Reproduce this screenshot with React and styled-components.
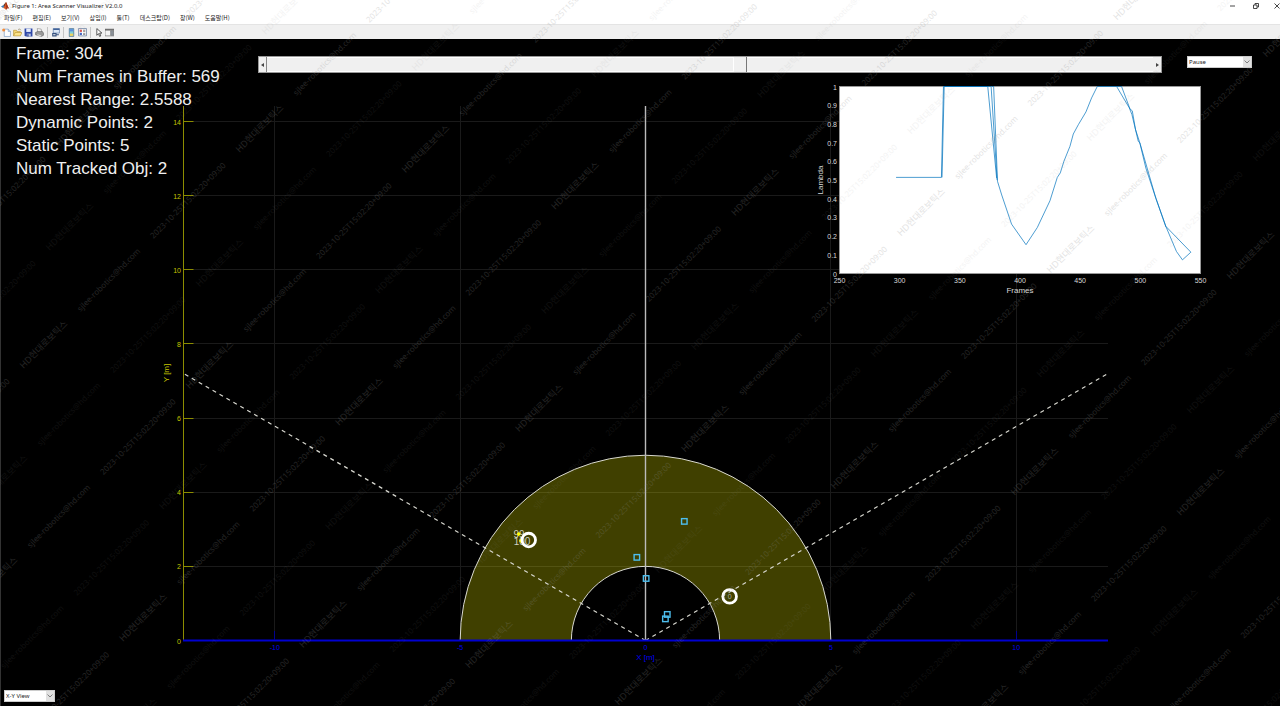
import { useState } from "react";
import styled, { createGlobalStyle } from "styled-components";

const menus = [
  "파일(F)",
  "편집(E)",
  "보기(V)",
  "삽입(I)",
  "툴(T)",
  "데스크탑(D)",
  "창(W)",
  "도움말(H)",
];

const totalFrames = 569;

// [frame, lambda]
const lambdaTraces = [
  [[297, 0.514], [334.7, 0.514], [336.4, 1], [373.2, 1], [380.6, 0.51]],
  [[335.2, 0.514], [337, 1], [376, 1], [381, 0.5]],
  [
    [376.4, 1], [378.1, 1], [381.3, 0.493], [384.8, 0.42], [393, 0.264],
    [405, 0.154], [414.4, 0.246], [424.9, 0.389], [431, 0.514], [433.5, 0.538],
    [436.5, 0.6], [441.5, 0.68], [444.3, 0.746], [448.5, 0.796], [454.8, 0.864],
    [459.5, 0.939], [464.2, 1], [480.3, 1], [490.8, 0.886], [493, 0.85],
    [498.3, 0.707], [499.6, 0.698], [504.6, 0.564], [512, 0.42], [521.2, 0.252],
    [542, 0.114], [535, 0.073], [530, 0.118], [521.2, 0.252],
  ],
  [
    [480.3, 1], [484.4, 1], [491.4, 0.88], [493.3, 0.87], [496, 0.77],
    [500, 0.69], [513, 0.4], [521.2, 0.25],
  ],
];

// metres, relative to the sensor
const staticPoints = [
  [1.04, 3.22],
  [-0.24, 2.25],
  [0.01, 1.68],
  [0.58, 0.71],
  [0.53, 0.59],
];
const dynamicPoints = [
  [-3.42, 2.87],
  [-3.36, 2.69],
];
const trackedObjects = [
  [-3.15, 2.71],
  [2.27, 1.19],
];

const SCALE = 37.07;
const toX = (m) => 645.5 + m * SCALE;
const toY = (m) => 601.5 - m * SCALE;

const range = (from, to, step = 1) => {
  const list = [];
  for (let i = from; i <= to; i += step) list.push(i);
  return list;
};

const arc = (r) =>
  `M${toX(-r)} ${toY(0)}A${r * SCALE} ${r * SCALE} 0 0 1 ${toX(r)} ${toY(0)}`;

const zone = `${arc(5)}L${toX(2)} ${toY(0)}A${2 * SCALE} ${2 * SCALE} 0 0 0 ${toX(-2)} ${toY(0)}Z`;

const App = () => {
  const [frame, setFrame] = useState(304);

  const stats = [
    `Frame: ${frame}`,
    `Num Frames in Buffer: ${totalFrames}`,
    "Nearest Range: 2.5588",
    "Dynamic Points: 2",
    "Static Points: 5",
    "Num Tracked Obj: 2",
  ];

  return (
    <Window>
      <GlobalStyle />
      <TitleBar>
        <Logo />
        <Title>Figure 1: Area Scanner Visualizer V2.0.0</Title>
        <WindowButtons />
      </TitleBar>
      <MenuBar>
        {menus.map((menu) => (
          <MenuButton key={menu}>{menu}</MenuButton>
        ))}
      </MenuBar>
      <Toolbar />
      <Figure>
        <AreaPlot />
        <Stats>
          {stats.map((line) => (
            <li key={line}>{line}</li>
          ))}
        </Stats>
        <ScrollBar>
          <ArrowButton
            aria-label='Previous frame'
            onClick={() => setFrame(Math.max(0, frame - 1))}
          >
            <svg width='3' height='4' viewBox='0 0 3 4'>
              <path d='M3 0v4L0 2z' fill='#444' />
            </svg>
          </ArrowButton>
          <FrameRange
            type='range'
            aria-label='Frame'
            min='0'
            max={totalFrames}
            value={frame}
            onChange={(e) => setFrame(Number(e.target.value))}
          />
          <ArrowButton
            $end
            aria-label='Next frame'
            onClick={() => setFrame(Math.min(totalFrames, frame + 1))}
          >
            <svg width='3' height='4' viewBox='0 0 3 4'>
              <path d='M0 0v4l3-2z' fill='#444' />
            </svg>
          </ArrowButton>
        </ScrollBar>
        <PlaybackBox>
          <DropDown label='Playback' options={["Pause", "Play"]} />
        </PlaybackBox>
        <LambdaPlot />
        <ViewBox>
          <DropDown label='View' options={["X-Y View", "3D View"]} />
        </ViewBox>
      </Figure>
      <Watermark />
    </Window>
  );
};

const DropDown = ({ label, options }) => (
  <SelectBox>
    <Select aria-label={label}>
      {options.map((option) => (
        <option key={option}>{option}</option>
      ))}
    </Select>
    <SelectArrow>
      <svg width='6' height='4' viewBox='0 0 6 4'>
        <path d='M.5.5L3 3 5.5.5' fill='none' stroke='#666' strokeWidth='.8' />
      </svg>
    </SelectArrow>
  </SelectBox>
);

const Logo = () => (
  <svg width='8' height='8' viewBox='0 0 16 16'>
    <path d='M0 9l5-3 3 3-4 3z' fill='#3f7fb5' />
    <path d='M5 6l5-6 1 4-4 6z' fill='#6b3b2a' />
    <path d='M10 0c2 3 3 9 6 13-3-1-4-1-6 3-1-2-3-4-6-4 3-2 5-7 6-12z' fill='#d9541e' />
    <path d='M10 0c1 4 0 9 0 16 2-4 3-4 6-3-3-4-4-10-6-13z' fill='#a32c14' />
  </svg>
);

const WindowButtons = () => (
  <Controls>
    <ControlButton aria-label='Minimize'>
      <svg width='6' height='6' viewBox='0 0 6 6'>
        <path d='M0 3h5' stroke='#333' strokeWidth='.9' />
      </svg>
    </ControlButton>
    <ControlButton aria-label='Restore'>
      <svg width='6' height='6' viewBox='0 0 6 6' fill='none' stroke='#333' strokeWidth='.9'>
        <path d='M.5 2h3.5v3.5H.5zM2 2V.5h3.5V4H4' />
      </svg>
    </ControlButton>
    <ControlButton aria-label='Close'>
      <svg width='6' height='6' viewBox='0 0 6 6'>
        <path d='M.5.5l5 5m0-5l-5 5' stroke='#333' strokeWidth='.9' />
      </svg>
    </ControlButton>
  </Controls>
);

const Toolbar = () => (
  <ToolRow>
    <Tool label='New figure'>
      <path d='M4 2h7l4 4v9H4z' fill='#fff' stroke='#5b84b8' />
      <path d='M11 2v4h4' fill='#dbe7f5' stroke='#5b84b8' />
      <circle cx='3' cy='3.5' r='2.8' fill='#f08c3c' />
    </Tool>
    <Tool label='Open'>
      <path d='M1 14V4h5l1 2h6v3' fill='#f6d873' stroke='#b08a28' />
      <path d='M1 14l3-6h12l-3 6z' fill='#fbe38a' stroke='#b08a28' />
      <path d='M9 3c2-2 4-1 5 1' fill='none' stroke='#7a6a3a' />
    </Tool>
    <Tool label='Save'>
      <path d='M1 1h14v14H3l-2-2z' fill='#2f48a8' />
      <path d='M4 1h8v6H4z' fill='#e6ecfa' />
      <path d='M5 10h7v5H5z' fill='#b9c4e4' />
      <path d='M6 11h2v4H6z' fill='#22337c' />
    </Tool>
    <Tool label='Print'>
      <path d='M4 1l7 1 1 6H5z' fill='#fff' stroke='#777' />
      <path d='M1 8l4-2h8l2 3v4l-4 2-10-3z' fill='#999' stroke='#555' />
      <path d='M4 11l7 2v2l-7-2z' fill='#ddd' />
    </Tool>
    <Divider />
    <Tool label='Link plot'>
      <path d='M4 1h11v8H4z' fill='#dce8f6' stroke='#3c5f96' />
      <path d='M4 1h11v2.500H4z' fill='#3c5f96' />
      <path d='M3 10h6v4H3zM8 12h6' fill='none' stroke='#34507f' strokeWidth='1.800' />
    </Tool>
    <Divider />
    <Tool label='Insert colorbar'>
      <path d='M4 1h8v14H4z' fill='#7fd0d8' stroke='#34507f' />
      <path d='M5 2h6v4H5z' fill='#5b8fe0' />
      <path d='M5 10h6v4H5z' fill='#f2d45c' />
    </Tool>
    <Tool label='Insert legend'>
      <path d='M1 1h14v13H1z' fill='#fff' stroke='#34507f' />
      <path d='M3 3h4v4H3z' fill='#d9534f' />
      <path d='M3 8.500h4v4H3z' fill='#4466c4' />
      <path d='M9 4h4M9 6h4M9 9.500h4M9 11.500h4' stroke='#444' />
    </Tool>
    <Divider />
    <Tool label='Edit plot'>
      <path d='M5 1v12l3-3 2 5 2-1-2-5h4z' fill='#fff' stroke='#222' strokeWidth='1.300' />
    </Tool>
    <Tool label='Property inspector'>
      <path d='M0 2h16v12H0z' fill='#f4f4f4' stroke='#555' />
      <path d='M0 2h16v2.500H0z' fill='#666' />
      <path d='M10 5h5v8h-5z' fill='#b8c4d0' stroke='#555' />
      <path d='M11 7h3M11 9h3M11 11h3' stroke='#444' />
    </Tool>
  </ToolRow>
);

const Tool = ({ label, children }) => (
  <ToolButton aria-label={label}>
    <svg width='9' height='9' viewBox='0 0 16 16'>
      {children}
    </svg>
  </ToolButton>
);

const AreaPlot = () => (
  <PlotSvg viewBox='0 0 1280 667' role='img' aria-label='Area scanner plot'>
    <g stroke='#1a1a1a'>
      {range(2, 14, 2).map((m) => (
        <path key={m} d={`M183.500 ${Math.floor(toY(m)) + 0.5}H1108`} />
      ))}
      {[-10, -5, 5, 10].map((m) => (
        <path key={m} d={`M${Math.floor(toX(m)) + 0.5} 67V601`} />
      ))}
    </g>
    <path d={zone} fill='#ff0' fillOpacity='.25' />
    <g fill='none' stroke='#d8d8d0'>
      <path d={arc(5)} />
      <path d={arc(2)} />
      <path d='M645.500 67V601' stroke='#bbb' strokeWidth='1.400' />
      <path
        d={`M${toX(0)} ${toY(0)}L183.500 334.500M${toX(0)} ${toY(0)}L1108 334.500`}
        strokeDasharray='4 4'
        strokeWidth='1.200'
      />
    </g>
    <g stroke='#8c8c00'>
      <path d='M183.500 67V601' />
      {range(0, 14, 2).map((m) => (
        <path key={m} d={`M183.500 ${Math.floor(toY(m)) + 0.5}h10`} />
      ))}
    </g>
    <AxisText $color='#c4c400' $anchor='end'>
      {range(0, 14, 2).map((m) => (
        <text key={m} x='181' y={toY(m) + 3}>
          {m}
        </text>
      ))}
    </AxisText>
    <AxisText $color='#c4c400' $size='8px'>
      <text transform='translate(169 334) rotate(-90)'>Y [m]</text>
    </AxisText>
    <path d='M183 601.500H1108' stroke='#0000d0' strokeWidth='2' />
    {[-10, 10].map((m) => (
      <path key={m} d={`M${Math.floor(toX(m)) + 0.5} 601v-9`} stroke='#000090' />
    ))}
    <AxisText $color='#0000f0'>
      {[-10, -5, 0, 5, 10].map((m) => (
        <text key={m} x={toX(m)} y='611'>
          {m}
        </text>
      ))}
    </AxisText>
    <AxisText $color='#0000f0' $size='8px'>
      <text x={toX(0)} y='621'>
        X [m]
      </text>
    </AxisText>
    {staticPoints.map(([x, y]) => (
      <rect
        key={`${x},${y}`}
        x={toX(x) - 2.5}
        y={toY(y) - 2.5}
        width='5.500'
        height='5.500'
        fill='none'
        stroke='#4dbeee'
        strokeWidth='1.400'
      />
    ))}
    <AxisText $color='#d0d0c0' $size='10px'>
      <text x='519' y='499'>99</text>
      <text x='522' y='506'>100</text>
    </AxisText>
    {dynamicPoints.map(([x, y]) => (
      <circle key={x} cx={toX(x)} cy={toY(y)} r='1.800' fill='#ff0' />
    ))}
    {trackedObjects.map(([x, y]) => (
      <circle
        key={x}
        cx={toX(x)}
        cy={toY(y)}
        r='6.800'
        fill='none'
        stroke='#fff'
        strokeWidth='2.800'
      />
    ))}
    <AxisText $color='#b0b0a0'>
      <text x={toX(2.27)} y={toY(1.19) + 3}>0</text>
    </AxisText>
  </PlotSvg>
);

const lambdaX = (f) => 27.5 + ((f - 250) / 300) * 361;
const lambdaY = (l) => 193.5 - l * 187;

const LambdaPlot = () => (
  <LambdaSvg viewBox='0 0 400 220' role='img' aria-label='Lambda by frame'>
    <rect x='27.500' y='6.500' width='361' height='187' fill='#fff' stroke='#999' />
    {lambdaTraces.map((trace, i) => (
      <polyline
        key={i}
        points={trace.map(([f, l]) => `${lambdaX(f)},${lambdaY(l)}`).join(" ")}
        fill='none'
        stroke='#0072bd'
        strokeWidth='.7'
      />
    ))}
    <AxisText $color='#d8d8d8' $anchor='end'>
      {range(0, 10).map((n) => (
        <text key={n} x='25' y={lambdaY(n / 10) + 3}>
          {n / 10}
        </text>
      ))}
    </AxisText>
    <AxisText $color='#d8d8d8'>
      {range(250, 550, 50).map((f) => (
        <text key={f} x={lambdaX(f)} y='203'>
          {f}
        </text>
      ))}
    </AxisText>
    <AxisText $color='#d8d8d8' $size='8px'>
      <text x='208' y='213'>Frames</text>
      <text transform='translate(11 100) rotate(-90)'>Lambda</text>
    </AxisText>
  </LambdaSvg>
);

// Diagonal security text. Every band repeats the three strings, and the
// strong and faint bands take turns across the window.
const bands = [
  { x: 467, sum: 762, steps: [0, 180, 346], opacity: 0.25 },
  { x: 507, sum: 670, steps: [0, 166, 316], opacity: 0.1 },
];
const stamps = [
  { text: "2023-10-25T15:02:20+09:00", dx: 0, size: 8 },
  { text: "HD현대로보틱스", dx: 86, size: 9 },
  { text: "sjlee-robotics@hd.com", dx: 143, size: 8 },
];

const marks = bands.flatMap(({ x, sum, steps, opacity }) =>
  range(-5, 9).flatMap((k) => {
    const turn = Math.floor(k / 3);
    const start = x + turn * 495.5 + steps[k - turn * 3];
    const line = sum + k * 186.3;
    return range(-8, 8).flatMap((n) =>
      stamps.map(({ text, dx, size }) => {
        const left = start + n * 216 + dx;
        return { text, size, opacity, left, top: line - left };
      })
    );
  })
).filter((m) => m.left > -70 && m.left < 1276 && m.top > 4 && m.top < 770);

const Watermark = () => (
  <WatermarkSvg aria-hidden='true'>
    {marks.map((m) => (
      <text
        key={`${m.left} ${m.top}`}
        transform={`translate(${m.left + 2} ${m.top + 1}) rotate(-45)`}
        fontSize={m.size}
        opacity={m.opacity}
      >
        {m.text}
      </text>
    ))}
  </WatermarkSvg>
);

const GlobalStyle = createGlobalStyle`
  * {
    box-sizing: border-box;
  }
  body {
    margin: 0;
    background: #000;
  }
  button,
  select {
    font: inherit;
    color: inherit;
    padding: 0;
    border: 0;
    background: none;
  }
`;

const Window = styled.div`
  position: relative;
  display: flex;
  flex-direction: column;
  min-height: 100vh;
  overflow: hidden;
  background: #fff;
  color: #222;
  font: 6px/12px "Noto Sans", "Noto Sans CJK KR", sans-serif;
`;

const TitleBar = styled.header`
  display: flex;
  align-items: center;
  height: 12px;
  padding-left: 1px;
  gap: 3px;
`;

const Title = styled.h1`
  flex: 1;
  margin: 0;
  font: inherit;
`;

const Controls = styled.div`
  display: flex;
  gap: 11px;
`;

const ControlButton = styled.button`
  display: grid;
  place-items: center;
  width: 12px;
  height: 12px;
  &:last-child {
    width: 7px;
  }
`;

const MenuBar = styled.nav`
  display: flex;
  gap: 10px;
  height: 12px;
  padding-left: 4px;
  font-family: "Noto Sans CJK KR", sans-serif;
`;

const MenuButton = styled.button`
  white-space: nowrap;
`;

const ToolRow = styled.div`
  display: flex;
  align-items: center;
  height: 15px;
  padding-left: 1px;
  background: #f0f0f0;
  border-top: 1px solid #e4e4e4;
`;

const ToolButton = styled.button`
  display: grid;
  place-items: center;
  width: 11px;
  height: 12px;
`;

const Divider = styled.span`
  width: 1px;
  height: 11px;
  margin: 0 2px;
  background: #c4c4c4;
`;

const Figure = styled.main`
  flex: 1;
  display: grid;
  grid-template-columns: 258px 1fr 93px;
  grid-template-rows: auto auto 1fr auto;
  background: #000;
  box-shadow: inset 1px 0 #333;
`;

const PlotSvg = styled.svg`
  grid-area: 1 / 1 / -1 / -1;
  display: block;
  width: 100%;
`;

const Stats = styled.ul`
  grid-area: 1 / 1 / 4 / 2;
  margin: 0;
  padding: 3px 0 0 16px;
  list-style: none;
  color: #f0f0f0;
  font: 17px/23px "Liberation Sans", Arial, sans-serif;
  white-space: nowrap;
`;

const ScrollBar = styled.div`
  grid-area: 1 / 2;
  display: flex;
  height: 17px;
  margin: 17px 25px 0 0;
  background: #f0f0f0;
  border: 1px solid #999;
`;

const ArrowButton = styled.button`
  display: grid;
  place-items: center;
  width: 8px;
  border-right: ${(props) => (props.$end ? 0 : "1px solid #888")};
`;

const FrameRange = styled.input`
  flex: 1;
  min-width: 0;
  height: 15px;
  margin: 0;
  appearance: none;
  background: #f0f0f0;
  border-block: 1px solid #fff;
  &::-webkit-slider-thumb {
    appearance: none;
    width: 14px;
    height: 15px;
    background: #f0f0f0;
    border-left: 1px solid #fff;
    border-right: 1px solid #777;
  }
`;

const PlaybackBox = styled.div`
  grid-area: 1 / 3;
  margin: 17px 28px 0 0;
`;

const ViewBox = styled.div`
  grid-area: 4 / 1;
  width: 51px;
  margin: 0 0 4px 4px;
`;

const SelectBox = styled.div`
  display: grid;
  height: 12px;
  background: #fff;
  border: 1px solid #ccc;
`;

const Select = styled.select`
  grid-area: 1 / 1;
  width: 100%;
  height: 10px;
  padding-left: 1px;
  appearance: none;
  line-height: 10px;
`;

const SelectArrow = styled.span`
  grid-area: 1 / 1;
  justify-self: end;
  display: grid;
  place-items: center;
  width: 8px;
  background: #e1e1e1;
  pointer-events: none;
`;

const LambdaSvg = styled.svg`
  grid-area: 2 / 2 / 3 / 4;
  justify-self: end;
  width: 400px;
  margin: 7px 68px 0 0;
`;

const AxisText = styled.g`
  fill: ${(props) => props.$color};
  font: ${(props) => props.$size || "7px"} "Liberation Sans", Arial, sans-serif;
  text-anchor: ${(props) => props.$anchor || "middle"};
`;

const WatermarkSvg = styled.svg`
  position: absolute;
  inset: 0;
  width: 100%;
  height: 100%;
  pointer-events: none;
  fill: #909090;
  font-family: "Noto Sans", "Noto Sans CJK KR", sans-serif;
`;

export default App;
